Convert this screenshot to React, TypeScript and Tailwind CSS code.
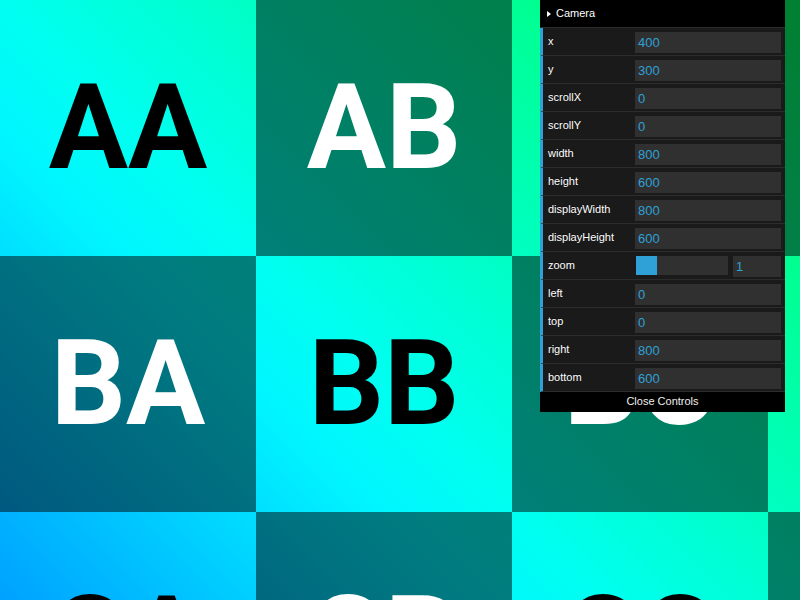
import React from "react";

const TILE = 256;
const ROWS = ["A", "B", "C"];
const COLS = ["A", "B", "C", "D"];

// bright colour along the diagonal (u = x - y); dark tiles are half of it
function bright(u: number): [number, number, number] {
  const d = (u + 80) * 0.18;
  if (d >= 0) return [0, 255, Math.max(0, Math.round(255 - d))];
  return [0, Math.max(0, Math.round(255 + d)), 255];
}

function tileBg(r: number, c: number, dark: boolean) {
  const center = c * TILE + TILE / 2 - (r * TILE + TILE / 2);
  const stops = [0, 0.25, 0.5, 0.75, 1].map((t) => {
    const [R, G, B] = bright(center + (t - 0.5) * TILE * 2);
    const k = dark ? 0.5 : 1;
    return `rgb(${Math.round(R * k)},${Math.round(G * k)},${Math.round(B * k)}) ${t * 100}%`;
  });
  return `linear-gradient(45deg, ${stops.join(", ")})`;
}

type Row = { label: string; value: string; slider?: boolean };

const camera: Row[] = [
  { label: "x", value: "400" },
  { label: "y", value: "300" },
  { label: "scrollX", value: "0" },
  { label: "scrollY", value: "0" },
  { label: "width", value: "800" },
  { label: "height", value: "600" },
  { label: "displayWidth", value: "800" },
  { label: "displayHeight", value: "600" },
  { label: "zoom", value: "1", slider: true },
  { label: "left", value: "0" },
  { label: "top", value: "0" },
  { label: "right", value: "800" },
  { label: "bottom", value: "600" },
];

function Panel() {
  return (
    <div className="absolute top-0 right-[15px] w-[245px] font-['Liberation_Sans',Arial,sans-serif] text-[11px] text-[#eee]">
      <div className="flex h-[28px] items-center border-b border-[#2c2c2c] bg-black pl-[7px] text-white">
        <svg width="4" height="6" viewBox="0 0 4 6">
          <path d="M0 0L4 3L0 6Z" fill="#fff" />
        </svg>
        <span className="ml-[5px]">Camera</span>
      </div>
      {camera.map((row) => (
        <div
          key={row.label}
          className="flex h-[28px] border-b border-l-[3px] border-b-[#2c2c2c] border-l-[#2fa1d6] bg-[#1a1a1a] pr-[4px] pl-[5px]"
        >
          <div className="w-[87px] shrink-0 leading-[27px] text-white [text-shadow:0_-1px_0_#111]">{row.label}</div>
          {row.slider ? (
            <div className="flex flex-1 pt-[4px]">
              <div className="ml-[1px] h-[19px] w-[92px] bg-[#303030]">
                <div className="h-full w-[21px] bg-[#2fa1d6]" />
              </div>
              <div className="ml-auto h-[21px] w-[48px] bg-[#303030] px-[3px] text-[13px] leading-[21px] text-[#2fa1d6]">
                {row.value}
              </div>
            </div>
          ) : (
            <div className="flex-1 pt-[4px]">
              <div className="h-[21px] bg-[#303030] px-[3px] text-[13px] leading-[21px] text-[#2fa1d6]">
                {row.value}
              </div>
            </div>
          )}
        </div>
      ))}
      <div className="h-[20px] bg-black text-center leading-[19px] text-[#eee]">Close Controls</div>
    </div>
  );
}

export default function App() {
  return (
    <div className="relative h-[600px] w-[800px] overflow-hidden bg-black">
      <div className="grid w-[1024px] grid-cols-[repeat(4,256px)] grid-rows-[repeat(3,256px)]">
        {ROWS.map((rl, r) =>
          COLS.map((cl, c) => {
            const dark = (r + c) % 2 === 1;
            return (
              <div
                key={rl + cl}
                className={
                  "flex items-center justify-center font-['Roboto',sans-serif] text-[118px] leading-none font-bold " +
                  (dark ? "text-white" : "text-black")
                }
                style={{ backgroundImage: tileBg(r, c, dark) }}
              >
                {rl + cl}
              </div>
            );
          })
        )}
      </div>
      <Panel />
    </div>
  );
}
